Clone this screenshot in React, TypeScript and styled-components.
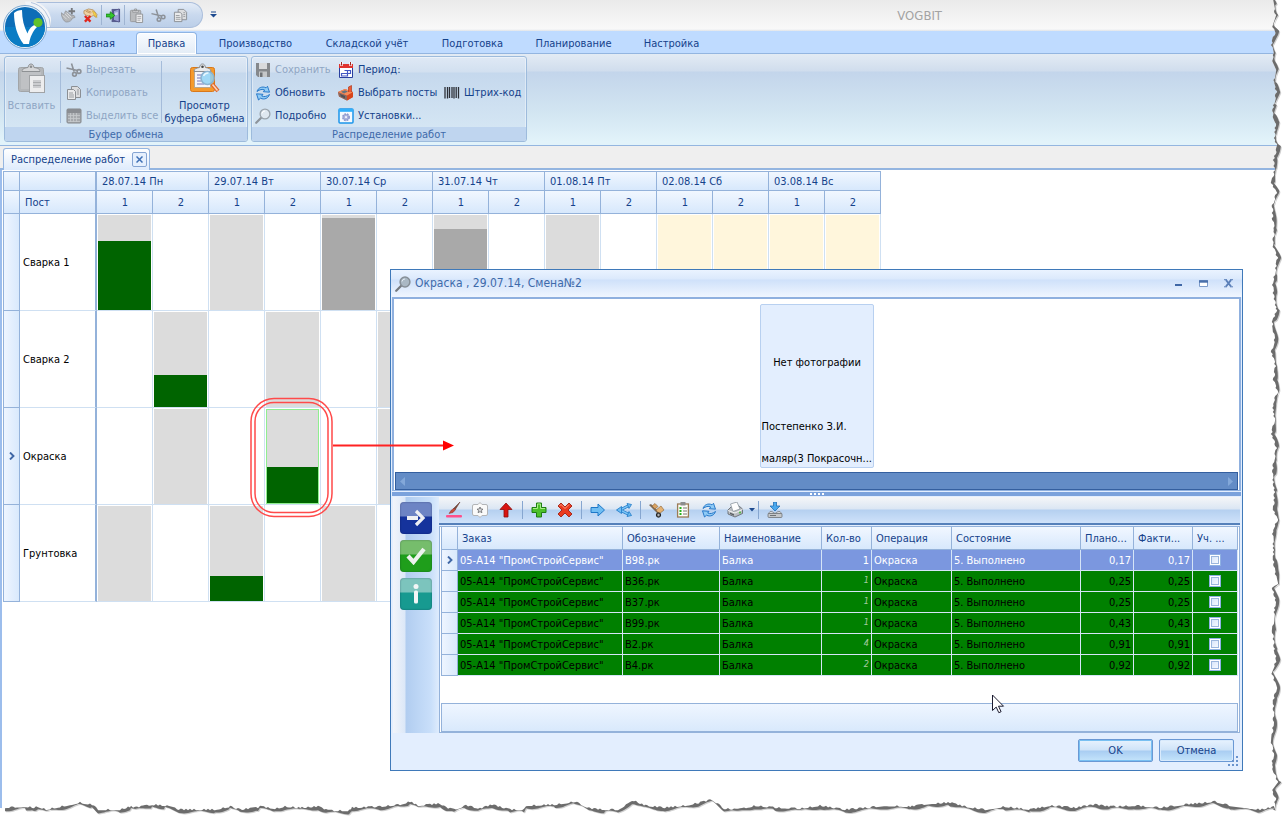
import React from "react";
import styled, { createGlobalStyle, css } from "styled-components";

const Global = createGlobalStyle`
  * { box-sizing: border-box; }
  html, body { margin: 0; padding: 0; background: #fff; }
  body, button, input, table {
    font-family: Tahoma, "DejaVu Sans Condensed", "DejaVu Sans", sans-serif;
    font-size: 11px;
    line-height: 13px;
  }
  button { padding: 0; margin: 0; border: 0; background: none; color: inherit; cursor: default; }
`;

/* ---------- icons ---------- */

const Svg = styled.svg<{ $s: number }>`
  display: block;
  flex: none;
  width: ${(p) => p.$s}px;
  height: ${(p) => p.$s}px;
`;

const art: Record<string, React.ReactNode> = {
  cut: (
    <g fill="none" stroke="#8d9299" strokeWidth="1.6">
      <path d="M5.500 1.500L8 9.500M.5 6l11 2.500" />
      <circle cx="13" cy="9.500" r="1.900" />
      <circle cx="8.500" cy="12.300" r="1.900" />
    </g>
  ),
  copy: (
    <g stroke="#8b8f94">
      <path d="M5.500 1.500h6l3 3v8h-9z" fill="#dcdddf" />
      <path d="M1.500 4.500h6l2 2v8h-8z" fill="#e9eaeb" />
      <path d="M3 8h4M3 10h5M3 12h5M11 5h2M11 7h2M11 9h2" stroke="#9a9da1" />
    </g>
  ),
  paste: (
    <g>
      <rect x="1.500" y="2.500" width="11" height="12" rx="1" fill="#b9bbbe" stroke="#97999c" />
      <path d="M4 2.500h6v2H4z M6 1h2v2H6z" fill="#dedfe0" stroke="#8b8d90" strokeWidth=".8" />
      <path d="M7.500 6.500h7v9h-7z" fill="#ececed" stroke="#919396" />
      <path d="M9 9h4M9 11h4M9 13h3" stroke="#a7a9ac" />
    </g>
  ),
  pasteBig: (
    <g>
      <rect x="2.500" y="5.500" width="25" height="24" rx="2" fill="#b4b7ba" stroke="#a2a5a8" />
      <rect x="5" y="8" width="20" height="19" fill="#bfc1c4" />
      <path d="M6 9.500c0-3 3-3.500 6-4 .5-2.500 1.500-3.500 3-3.500s2.500 1 3 3.500c3 .5 6 1 6 4z" fill="#d5d6d8" stroke="#8e9194" />
      <circle cx="15" cy="4.800" r="1.300" fill="#8b8e91" />
      <rect x="13.500" y="13.500" width="15" height="17" fill="#ededee" stroke="#a0a3a6" />
      <rect x="17" y="18" width="8" height="8" fill="#cccdd0" />
      <path d="M17 20.500h8M17 23.500h8" stroke="#a9abae" />
    </g>
  ),
  previewBig: (
    <g>
      <rect x="1.500" y="5.500" width="24" height="24" rx="2" fill="#f59a2c" stroke="#d9781a" />
      <rect x="5.500" y="9.500" width="16" height="16" fill="#f4f5fb" stroke="#b9a68d" />
      <path d="M5 9.500c0-3 3-3.500 5.500-4C11 3 12 2 13.500 2s2.500 1 3 3.500c2.500.5 5.500 1 5.500 4z" fill="#e9eaec" stroke="#8b8e92" />
      <circle cx="13.500" cy="4.800" r="1.300" fill="#444" />
      <path d="M8 13h6M8 16h4M8 19h4M8 22h7" stroke="#9ea0cf" strokeWidth="1.500" />
      <path d="M23 22l6 7" stroke="#e0662a" strokeWidth="4" />
      <path d="M23.500 22.500l5 6" stroke="#fbd5bd" strokeWidth="1.600" />
      <circle cx="18.500" cy="16" r="6.500" fill="#8fd2f5" fillOpacity=".85" stroke="#8bb4d2" strokeWidth="1.600" />
      <path d="M14.500 14a5 5 0 0 1 5-3" stroke="#e9f8ff" strokeWidth="1.500" fill="none" />
    </g>
  ),
  selectAll: (
    <g>
      <rect x="1" y="1" width="14" height="14" rx="1" fill="#a6a9ad" stroke="#85888c" />
      <rect x="1" y="1" width="14" height="4" fill="#8a8d92" />
      <path d="M2 7.500h12M2 10.500h12M2 13.500h12M4.500 5v9M7.500 5v9M10.500 5v9" stroke="#c7cacd" strokeWidth=".8" />
    </g>
  ),
  save: (
    <g>
      <path d="M1 1h14v14H3l-2-2z" fill="#85888c" />
      <rect x="4" y="1" width="8" height="6" fill="#d9dadc" />
      <rect x="4" y="9.500" width="8" height="5.500" fill="#c5c7c9" />
      <rect x="5" y="10.500" width="2.500" height="4.500" fill="#6f7276" />
    </g>
  ),
  refresh: (
    <g fill="#8fcbf6" stroke="#1b6fc4" strokeWidth=".9" strokeLinejoin="round">
      <path d="M2 6.500C3 3 7 .8 11 2.800L12.500 1.300 14.500 7.200 8.300 6.700 9.700 5C7.500 3.800 4.500 4.500 2 6.500z" />
      <path d="M14.500 9.500C13.500 13 9.500 15.200 5.500 13.200L3.500 15 1.500 8.800 8 9.300 6.700 11C9 12.200 12 11.500 14.500 9.500z" />
    </g>
  ),
  lens: (
    <g>
      <path d="M1.200 14.800l5-5" stroke="#8d949b" strokeWidth="2.200" strokeLinecap="round" />
      <circle cx="10" cy="6" r="4.900" fill="#dfe8f0" stroke="#9aa4ad" strokeWidth="1.300" />
      <path d="M7 5.500a3 3 0 0 1 3-2.500" stroke="#fff" fill="none" />
    </g>
  ),
  lensDark: (
    <g>
      <path d="M1.200 14.800l5-5" stroke="#74797f" strokeWidth="2.200" strokeLinecap="round" />
      <circle cx="10" cy="6" r="4.900" fill="#aab8c4" stroke="#868f97" strokeWidth="1.500" />
      <path d="M7 5.500a3 3 0 0 1 3-2.500" stroke="#e2ebf2" fill="none" />
    </g>
  ),
  calendar: (
    <g>
      <rect x="1.500" y="2.500" width="13" height="13" fill="#fff" stroke="#d8dbe6" />
      <rect x="1" y="2" width="14" height="4" fill="#e0342e" />
      <path d="M3.500 0v4M12.500 0v4" stroke="#fff" strokeWidth="2.400" />
      <path d="M3.500 0v3.500M12.500 0v3.500" stroke="#9c2822" />
      <path d="M1.500 6v9.500h13V6" fill="none" stroke="#2a3f9e" />
      <path d="M6.500 8.500h6v3h-9v2.500h6V8.500" fill="none" stroke="#4257c4" strokeWidth="1.200" />
    </g>
  ),
  posts: (
    <g>
      <path d="M0 7l7-3 8 3v5l-6 3.500-8-4z" fill="#d4512a" />
      <path d="M0 7l9 3.500v5l-8-4z" fill="#8a6a60" />
      <path d="M2 9l5 2v2.500l-4-2z" fill="#4f5157" />
      <path d="M9 10.500L15 7v5l-6 3.500z" fill="#d8461c" />
      <path d="M0 7l7-3 8 3-6 3.500z" fill="#f58a58" />
      <path d="M10.500 7V2l3-1.500V7" fill="#ec5a34" stroke="#b23a1c" strokeWidth=".7" />
      <path d="M3 6.800l4-1.600 3 1.300-4 2z" fill="#66727d" />
    </g>
  ),
  settings: (
    <g>
      <rect x="1" y="1" width="14" height="14" rx="1" fill="#f4faff" stroke="#1b95ea" strokeWidth="1.500" />
      <rect x="1" y="1" width="14" height="2.800" fill="#31b0fb" />
      <circle cx="8" cy="9.200" r="3.200" fill="#a8b2dd" stroke="#8d98cc" strokeWidth="1.600" strokeDasharray="1.700 .9" />
      <circle cx="8" cy="9.200" r="1.100" fill="#f1f3fb" />
    </g>
  ),
  barcode: (
    <path
      d="M1 2v12M3.500 2v12M5.500 2v11M8 2v11M10 2v12M12.200 2v11M14.500 2v12"
      stroke="#2c2f36"
      strokeWidth="1.300"
      strokeDasharray="11 .6"
    />
  ),
  handPlus: (
    <g>
      <path d="M0 5l3 2 2-4 4 3 2 2h3l1 2-3 1c0 2-3 4-6 4C4 15 1 12 0 5z" fill="#b4b6b9" stroke="#8b8e92" strokeWidth=".7" />
      <path d="M2 8l4 4M4 6l5 5M6 5l5 5" stroke="#dcdddf" />
      <path d="M11.500 0v7M8 3.500h7" stroke="#77797d" strokeWidth="2" />
    </g>
  ),
  handX: (
    <g>
      <path d="M1 3l5-2 5 1 4 5-1 3-3-2-2 1-5-1-3-2z" fill="#f0d2a4" stroke="#ab8047" strokeWidth=".7" />
      <path d="M10 3l3 2 2 5-3-2z" fill="#f8d54a" stroke="#c49a25" strokeWidth=".5" />
      <path d="M3 3.500l5 2M4 2.500l5 2" stroke="#b5874a" strokeWidth=".8" />
      <path d="M2 8.500l6 6M8 8.500l-6 6" stroke="#e0261d" strokeWidth="2.500" />
    </g>
  ),
  exit: (
    <g>
      <path d="M6 1h9v14H6z" fill="#595e8f" />
      <path d="M8 3l6-2v14l-6-2z" fill="#9a9fd4" stroke="#43477c" strokeWidth=".7" />
      <path d="M9.500 5l3-.8v3l-3 .5z" fill="#cfd3f2" />
      <path d="M0 6.500h4.500V4L9.500 8l-5 4V9.500H0z" fill="#35c62f" stroke="#178016" strokeWidth=".8" />
    </g>
  ),
  brush: (
    <g>
      <path d="M14 0L7.500 6.500 9 8z" fill="#7b4a3a" stroke="#5e3328" strokeWidth=".5" />
      <path d="M8 6.200l1.500 1.500L7 10.500 3 11.500 5 8.500z" fill="#c94b3c" stroke="#813127" strokeWidth=".5" />
      <rect x="0" y="13" width="16" height="2.600" rx="1" fill="#ff4f8b" />
    </g>
  ),
  star: (
    <g>
      <path d="M2 2.500h4l2-2 2 2h4a1.500 1.500 0 0 1 1.500 1.500v8a1.500 1.500 0 0 1-1.500 1.500h-4l-2 2-2-2H2A1.500 1.500 0 0 1 .5 12V4A1.500 1.500 0 0 1 2 2.500z" fill="#fafafa" stroke="#b2b4b7" />
      <path d="M8 5l.9 2 2.100.2-1.600 1.400.5 2.100L8 9.600l-1.900 1.100.5-2.100L5 7.200 7.100 7z" fill="#d5d6d8" stroke="#686a6d" strokeWidth=".8" />
    </g>
  ),
  up: <path d="M8 1l6 6.500h-4V15H6V7.500H2z" fill="#d81411" stroke="#8d0f0d" strokeWidth=".8" />,
  plus: (
    <g>
      <path d="M5.500 1h5v4.500H15v5h-4.500V15h-5v-4.500H1v-5h4.500z" fill="#4cc02a" stroke="#1f7d13" />
      <path d="M2 6.500h4.500V2h3v4.500H14" fill="none" stroke="#a7ee87" />
    </g>
  ),
  del: (
    <g>
      <path d="M1 4l3-3 4 4 4-4 3 3-4 4 4 4-3 3-4-4-4 4-3-3 4-4z" fill="#ea3a1f" stroke="#a31f10" strokeWidth=".9" />
      <path d="M2.500 4L4 2.500l4 4 4-4" fill="none" stroke="#ff9a80" />
    </g>
  ),
  right: <path d="M1 5.500h7V2l6.500 6L8 14v-3.500H1z" fill="#6fbdf2" stroke="#1d78c8" />,
  share: (
    <g>
      <path d="M13 3.500L4 8l9 4.500" fill="none" stroke="#1d78c8" strokeWidth="3" />
      <path d="M13 3.500L4 8l9 4.500" fill="none" stroke="#7cc5f5" strokeWidth="1.400" />
      <path d="M11 1.500l4.500 1-2.500 4zM11 14.500l4.500-1-2.500-4zM.5 8l5-3.500v7z" fill="#6fbdf2" stroke="#1d78c8" strokeWidth=".8" />
    </g>
  ),
  barrow: (
    <g>
      <path d="M0 3l2-1 9 9-2 1z" fill="#7b6a58" />
      <path d="M3 4l3-2.500 3 3L6 7z" fill="#d9a262" stroke="#8c6231" strokeWidth=".6" />
      <path d="M7 8l5-4 3 4-5 4z" fill="#e3b274" stroke="#8c6231" strokeWidth=".6" />
      <circle cx="9.500" cy="13" r="2.200" fill="#666" stroke="#222" />
      <circle cx="9.500" cy="13" r=".8" fill="#ddd" />
    </g>
  ),
  checklist: (
    <g>
      <rect x="2.600" y="2" width="10.800" height="13" fill="#fdfdf8" stroke="#9a7b56" strokeWidth="1.300" />
      <rect x="5.500" y="0" width="5" height="3.500" fill="#8b8d8f" />
      <path d="M4.500 6h2M4.500 9h2M4.500 12h2" stroke="#27b321" strokeWidth="1.800" />
      <path d="M8 6h4M8 9h4M8 12h4" stroke="#777" />
    </g>
  ),
  printer: (
    <g>
      <path d="M1 8l3-3 8-1 3.500 3v4.500L8 15l-7-3z" fill="#b9bdc1" stroke="#5d6166" strokeWidth=".8" />
      <path d="M3.500 2L10 0l3 7-7 2.500z" fill="#fdfdfd" stroke="#8c959e" strokeWidth=".8" />
      <path d="M1 8.500l7 2.500 7.500-3.500" fill="none" stroke="#f3f4f5" />
      <path d="M3 10.500l4 1.800v1.400l-4-1.700z" fill="#5b5f64" />
      <circle cx="13" cy="10.500" r=".9" fill="#3fbf2e" />
    </g>
  ),
  download: (
    <g>
      <path d="M6.500 0h3v4H13L8 9 3 4h3.500z" fill="#4ba9ee" stroke="#2370b5" strokeWidth=".8" />
      <path d="M1 12l2-2.500h2l3 2 3-2h2l2 2.500z" fill="#d6d8da" stroke="#777a7e" strokeWidth=".7" />
      <rect x="1" y="11.500" width="14" height="4" rx="1" fill="#c4c7ca" stroke="#6f7377" strokeWidth=".8" />
      <path d="M3 13.500h6" stroke="#6f7377" />
    </g>
  ),
};

const Icon = ({ name, size = 16, box = 16 }: { name: string; size?: number; box?: number }) => (
  <Svg $s={size} viewBox={`0 0 ${box} ${box}`} aria-hidden="true">
    {art[name]}
  </Svg>
);

/* ---------- shell ---------- */

const Page = styled.div`
  position: relative;
  min-height: 100vh;
  display: flex;
  flex-direction: column;
  background: #fff;
  overflow: hidden;
`;

const TitleBar = styled.header`
  height: 31px;
  display: flex;
  align-items: flex-start;
  padding-left: 32px;
  background: linear-gradient(#eaeaea, #f9f9f9 29px, #dfe3e8);
`;

const Orb = styled.button`
  position: absolute;
  left: 3px;
  top: 5px;
  width: 44px;
  height: 44px;
  border-radius: 50%;
  z-index: 2;
`;

const OrbArt = styled.svg`
  display: block;
  width: 52px;
  height: 52px;
  margin: -4px;
`;

const QuickBar = styled.div`
  height: 26px;
  margin-top: 2px;
  padding: 0 11px 0 25px;
  display: flex;
  align-items: center;
  border: 1px solid #a9bddb;
  border-left: 0;
  border-radius: 0 14px 14px 0;
  background: linear-gradient(#e4ecf7, #c9d9ee 50%, #bccfe8);
`;

const QuickButton = styled.button`
  width: 22px;
  height: 22px;
  display: grid;
  place-items: center;
`;

const QuickRule = styled.i`
  width: 1px;
  height: 20px;
  background: #9fb4d2;
`;

const QuickMore = styled.button`
  width: 20px;
  height: 28px;
  display: grid;
  place-items: center;
`;

const AppTitle = styled.h1`
  margin: 8px 344px 0 auto;
  font-size: 13px;
  line-height: 16px;
  font-weight: 400;
  color: #a3a3a3;
`;

const Tabs = styled.nav`
  height: 23px;
  display: flex;
  gap: 10px;
  padding: 1px 0 0 61px;
  background: #bfdbff;
  border-bottom: 1px solid #93b5e0;
`;

const RibbonTab = styled.button<{ $w: number; $on?: boolean }>`
  min-width: ${(p) => p.$w}px;
  height: 22px;
  white-space: nowrap;
  color: #15428b;
  ${(p) =>
    p.$on &&
    css`
      background: linear-gradient(#f8fbff, #e3ecf6);
      border: 1px solid #8fb4e3;
      border-bottom: 0;
      border-radius: 4px 4px 0 0;
      box-shadow: inset 0 0 0 1px #fff;
    `}
`;

const Ribbon = styled.div`
  height: 92px;
  display: flex;
  gap: 3px;
  padding: 2px 4px;
  background: linear-gradient(#e3ebf4, #d0dded 17px, #c3d5eb 18px, #d3e6f2 60px, #e2f3fa 88px);
  border-bottom: 1px solid #94b6e0;
  box-shadow: 0 1px 0 #c3d7f2;
`;

const Group = styled.section`
  height: 86px;
  display: flex;
  flex-direction: column;
  border: 1px solid #9dbbdc;
  border-radius: 3px;
  overflow: hidden;
  background: linear-gradient(#dfe9f5, #d2e0f0 15px, #c5d8ed 16px, #d8e9f5);
  box-shadow: inset 0 0 0 1px rgba(255, 255, 255, 0.4);
`;

const GroupBody = styled.div`
  flex: 1;
  display: flex;
  padding: 1px 3px 0 1px;
`;

const GroupCaption = styled.h2`
  margin: 0;
  height: 15px;
  font-size: 11px;
  line-height: 15px;
  font-weight: 400;
  text-align: center;
  color: #3e6aaa;
  background: #bfd5ef;
`;

const BigButton = styled.button<{ $w: number }>`
  width: ${(p) => p.$w}px;
  height: 69px;
  display: flex;
  flex-direction: column;
  align-items: center;
  gap: 5px;
  padding-top: 4px;
  color: #15428b;
  white-space: nowrap;
  &:disabled { color: #8fa6c4; }
`;

const Rule = styled.i`
  width: 1px;
  height: 62px;
  margin: 3px 3px 0;
  background: #a5bcda;
`;

const Stack = styled.div<{ $w: number }>`
  width: ${(p) => p.$w}px;
  display: grid;
  grid-template-rows: repeat(3, 23px);
`;

const SmallButton = styled.button<{ $row?: number }>`
  grid-row: ${(p) => p.$row ?? "auto"};
  display: flex;
  align-items: center;
  gap: 4px;
  padding-left: 2px;
  color: #15428b;
  white-space: nowrap;
  &:disabled { color: #8fa6c4; }
`;

const DocTabs = styled.div`
  height: 24px;
  padding: 2px 0 0 3px;
  background: #efefef;
  border-bottom: 2px solid #94b5e0;
`;

const DocTab = styled.div`
  width: 147px;
  height: 22px;
  position: relative;
  display: flex;
  align-items: center;
  justify-content: space-between;
  padding: 0 2px 0 7px;
  color: #15428b;
  white-space: nowrap;
  border: 1px solid #94b5e0;
  border-bottom: 0;
  border-radius: 3px 3px 0 0;
  background: linear-gradient(#fff, #deebfc);
`;

const DocClose = styled.button`
  width: 15px;
  height: 15px;
  display: grid;
  place-items: center;
  border: 1px solid #86a5d2;
  border-radius: 2px;
  background: #e6f0fd;
`;

/* ---------- schedule ---------- */

const Workspace = styled.main`
  flex: 1;
  padding: 1px 0 0 1px;
  border-left: 2px solid #9cbdec;
`;

const Plan = styled.table`
  width: 878px;
  table-layout: fixed;
  border-collapse: separate;
  border-spacing: 0;
  border-left: 1px solid #94b2da;
  border-top: 1px solid #94b2da;
`;

const HeadCell = styled.th<{ $h: number; $left?: boolean; $freeze?: boolean }>`
  height: ${(p) => p.$h}px;
  padding: 0 4px 0 5px;
  font-weight: 400;
  text-align: ${(p) => (p.$left ? "left" : "center")};
  color: #15428b;
  white-space: nowrap;
  background: linear-gradient(#f1f7ff, #d7e8fc);
  border-right: ${(p) => (p.$freeze ? 2 : 1)}px solid #94b2da;
  border-bottom: 1px solid #94b2da;
`;

const Marker = styled.td`
  padding: 0;
  text-align: center;
  background: linear-gradient(90deg, #eef5ff, #d9e9fc);
  border-right: 1px solid #94b2da;
  border-bottom: 1px solid #94b2da;
`;

const Arrow = styled.svg`
  display: block;
  width: 6px;
  height: 8px;
  margin: 0 auto;
`;

const PostName = styled.th`
  height: 97px;
  padding: 0 3px;
  font-weight: 400;
  text-align: left;
  color: #000;
  border-right: 2px solid #94b2da;
  border-bottom: 1px solid #cfe0f2;
`;

const Shift = styled.td`
  height: 97px;
  padding: 1px 1px 0;
  border-right: 1px solid #cfe0f2;
  border-bottom: 1px solid #cfe0f2;
`;

const Bar = styled.div<{ $tone: string; $focus?: boolean }>`
  height: 95px;
  display: flex;
  align-items: flex-end;
  background: ${(p) => p.$tone};
  outline: ${(p) => (p.$focus ? "1px solid #90ee90" : "none")};
  outline-offset: -1px;
`;

const Load = styled.div<{ $h: number; $tone: string }>`
  width: 100%;
  height: ${(p) => p.$h}px;
  background: ${(p) => p.$tone};
`;

const Chevron = () => (
  <Arrow viewBox="0 0 6 8" aria-hidden="true">
    <path d="M1 .5L4.500 4 1 7.500" fill="none" stroke="#3f67a6" strokeWidth="1.900" />
  </Arrow>
);

type Slot = null | { base: string; load?: number; tone?: string; focus?: boolean };
const G: Slot = { base: "#dcdcdc" };
const C: Slot = { base: "#fff6dc" };
const green = (load: number, focus = false): Slot => ({ base: "#dcdcdc", load, tone: "#006400", focus });
const dark = (load: number): Slot => ({ base: "#dcdcdc", load, tone: "#a9a9a9" });

const days = ["28.07.14 Пн", "29.07.14 Вт", "30.07.14 Ср", "31.07.14 Чт", "01.08.14 Пт", "02.08.14 Сб", "03.08.14 Вс"];
const posts: { name: string; current?: boolean; slots: Slot[] }[] = [
  { name: "Сварка 1", slots: [green(69), null, G, null, dark(92), null, dark(81), null, G, null, C, C, C, C] },
  { name: "Сварка 2", slots: [null, green(32), null, G, null, G, null, G, null, null, C, C, C, C] },
  { name: "Окраска", current: true, slots: [null, G, null, green(37, true), null, G, null, G, null, null, C, C, C, C] },
  { name: "Грунтовка", slots: [G, null, green(25), null, G, null, G, null, G, null, C, C, C, C] },
];

const Schedule = () => (
  <Plan>
    <colgroup>
      <col style={{ width: 16 }} />
      <col style={{ width: 77 }} />
      {days.flatMap((d) => [<col key={d + 1} style={{ width: 56 }} />, <col key={d + 2} style={{ width: 56 }} />])}
    </colgroup>
    <thead>
      <tr>
        <HeadCell $h={19} />
        <HeadCell $h={19} $freeze />
        {days.map((d) => (
          <HeadCell key={d} $h={19} $left colSpan={2}>
            {d}
          </HeadCell>
        ))}
      </tr>
      <tr>
        <HeadCell $h={23} />
        <HeadCell $h={23} $left $freeze>
          Пост
        </HeadCell>
        {days.flatMap((d) =>
          [1, 2].map((n) => (
            <HeadCell key={d + n} $h={23}>
              {n}
            </HeadCell>
          ))
        )}
      </tr>
    </thead>
    <tbody>
      {posts.map((p) => (
        <tr key={p.name}>
          <Marker>{p.current && <Chevron />}</Marker>
          <PostName scope="row">{p.name}</PostName>
          {p.slots.map((s, i) => (
            <Shift key={i}>
              {s && (
                <Bar $tone={s.base} $focus={s.focus}>
                  {s.load && <Load $h={s.load} $tone={s.tone!} />}
                </Bar>
              )}
            </Shift>
          ))}
        </tr>
      ))}
    </tbody>
  </Plan>
);

/* ---------- dialog ---------- */

const Dialog = styled.section`
  position: absolute;
  left: 390px;
  top: 269px;
  width: 853px;
  display: flex;
  flex-direction: column;
  border: 1px solid #3f79b9;
  background: #e3eefe;
`;

const DialogTitle = styled.div`
  height: 27px;
  display: flex;
  align-items: center;
  gap: 4px;
  padding: 0 3px 0 4px;
  background: linear-gradient(#eaf3ff, #dbe9fc 9px, #cfe1fa 10px, #f0f6ff);
  h2 {
    flex: 1;
    margin: 0;
    font-size: 12px;
    line-height: 15px;
    font-weight: 400;
    color: #3e6aaa;
  }
`;

const WindowButtons = styled.div`
  display: flex;
  gap: 4px;
`;

const WindowButton = styled.button`
  width: 21px;
  height: 20px;
  display: grid;
  place-items: center;
`;

const Photos = styled.div`
  height: 194px;
  margin: 0 1px;
  display: flex;
  flex-direction: column;
  align-items: center;
  padding: 5px 1px 0;
  background: #fff;
  border: solid #8fb0df;
  border-width: 2px 2px 1px;
`;

const Person = styled.article`
  width: 114px;
  height: 164px;
  margin-bottom: auto;
  padding: 1px 0 2px 1px;
  display: flex;
  flex-direction: column;
  color: #000;
  background: #e3eefe;
  border: 1px solid #b8d0f0;
  border-radius: 2px;
  p { margin: 0; white-space: nowrap; }
  p:first-child { height: 114px; line-height: 114px; text-align: center; }
  p + p { height: 13px; }
  p:last-child { margin-top: auto; }
`;

const ScrollTrack = styled.div`
  align-self: stretch;
  height: 18px;
  display: flex;
  align-items: center;
  justify-content: space-between;
  padding: 0 4px;
  background: #638cc6;
  border: 1px solid #345f9f;
`;

const Splitter = styled.div`
  height: 6px;
  margin: 0 1px;
  display: flex;
  justify-content: center;
  align-items: center;
  gap: 2px;
  background: #7ba2dc;
  border: 1px solid #e3eefe;
  border-width: 1px 0;
  i { width: 2px; height: 2px; background: #fff; }
`;

const Work = styled.div`
  height: 236px;
  display: flex;
  margin: 0 2px;
`;

const Side = styled.div`
  width: 46px;
  display: flex;
  flex-direction: column;
  gap: 6px;
  padding: 5px 0 0 7px;
  background: linear-gradient(90deg, #f1f4fa, #dce8f8 12px, #b1cdf0 13px, #c9dffa 38px, #dfecfd);
`;

const SideButton = styled.button<{ $from: string; $to: string }>`
  width: 32px;
  height: 32px;
  display: grid;
  place-items: center;
  border-radius: 4px;
  background: ${(p) => `linear-gradient(${p.$from} 0 4px, ${p.$from} 14px, ${p.$to} 15px, ${p.$to})`};
  box-shadow: inset 0 0 2px rgba(0, 0, 40, 0.4);
`;

const Right = styled.div`
  flex: 1;
  min-width: 0;
  display: flex;
  flex-direction: column;
`;

const Tools = styled.div`
  height: 28px;
  display: flex;
  align-items: center;
  padding-left: 2px;
  background: linear-gradient(#f5f6f8, #dbe6f3 12px, #b5d0f0 13px, #cfe2fa);
  border-bottom: 2px solid #5580ba;
`;

const Tool = styled.button`
  width: 26px;
  height: 24px;
  display: grid;
  place-items: center;
`;

const ToolRule = styled.i`
  width: 7px;
  height: 18px;
  background: linear-gradient(90deg, transparent 3px, #86a6d0 3px 4px, transparent 4px);
`;

const Caret = styled.button`
  width: 7px;
  height: 24px;
  display: grid;
  place-items: center;
`;

const GridBox = styled.div`
  flex: 1;
  margin-top: 1px;
  padding: 0 1px;
  display: flex;
  flex-direction: column;
  background: #fff;
  border: 1px solid #94b2da;
`;

const Orders = styled.table`
  width: 100%;
  table-layout: fixed;
  border-collapse: separate;
  border-spacing: 0;
  border-left: 1px solid #94b2da;
`;

const OrderHead = styled.th`
  height: 23px;
  padding: 0 4px;
  font-weight: 400;
  text-align: left;
  white-space: nowrap;
  overflow: hidden;
  color: #15428b;
  background: linear-gradient(#f1f7ff, #d7e8fc);
  border-right: 1px solid #94b2da;
  border-bottom: 1px solid #94b2da;
`;

const OrderRow = styled.tr<{ $on?: boolean }>`
  color: ${(p) => (p.$on ? "#fff" : "#000")};
  background: ${(p) => (p.$on ? "#7b97df" : "#008000")};
`;

const OrderCell = styled.td<{ $num?: boolean; $faint?: boolean }>`
  height: 21px;
  padding: 0 2px;
  white-space: nowrap;
  overflow: hidden;
  text-align: ${(p) => (p.$num ? "right" : "left")};
  border-right: 1px solid #d5e5f7;
  border-bottom: 1px solid #d5e5f7;
  ${(p) =>
    p.$faint &&
    css`
      padding-top: 3px;
      font-size: 9px;
      font-style: italic;
      vertical-align: top;
      color: #a5cba0;
    `}
`;

const Tick = styled.input`
  appearance: none;
  display: block;
  width: 12px;
  height: 12px;
  margin: 0 auto;
  border: 1px solid #8fb1e3;
  background: linear-gradient(135deg, #cfe0fa, #fff);
  box-shadow: inset 0 0 0 1px #fff, inset 0 0 0 2px #9bb6dd;
`;

const Summary = styled.div`
  height: 29px;
  margin-top: auto;
  border: 1px solid #94b2da;
  background: linear-gradient(#eff6ff, #d9e9fc);
`;

const Footer = styled.footer`
  position: relative;
  height: 37px;
  display: flex;
  justify-content: flex-end;
  gap: 6px;
  padding: 6px 8px 0 0;
`;

const PushButton = styled.button<{ $primary?: boolean }>`
  width: 75px;
  height: 23px;
  color: #15428b;
  border: 1px solid #6a98d4;
  border-radius: 2px;
  background: linear-gradient(#e7f2fe, #cfe3f8 10px, #a9cdf2 11px, #c4e4fb);
  box-shadow: inset 0 0 0 1px ${(p) => (p.$primary ? "#78c0f2" : "#d9eafc")};
`;

const Grip = styled.svg`
  position: absolute;
  right: 4px;
  bottom: 4px;
  width: 10px;
  height: 10px;
`;

const columns: { t: string; w?: number }[] = [
  { t: "Заказ", w: 165 },
  { t: "Обозначение", w: 97 },
  { t: "Наименование", w: 102 },
  { t: "Кол-во", w: 50 },
  { t: "Операция", w: 80 },
  { t: "Состояние", w: 129 },
  { t: "Плано...", w: 53 },
  { t: "Факти...", w: 59 },
  { t: "Уч. ..." },
];
const orders: [string, number, string][] = [
  ["В98.рк", 1, "0,17"],
  ["В36.рк", 1, "0,25"],
  ["В37.рк", 1, "0,25"],
  ["В99.рк", 1, "0,43"],
  ["В2.рк", 4, "0,91"],
  ["В4.рк", 2, "0,92"],
];

const tools = ["brush", "star", "up", "|", "plus", "del", "|", "right", "share", "|", "barrow", "checklist", "refresh", "printer", "v", "|", "download"];

const ShiftDialog = () => (
  <Dialog role="dialog" aria-labelledby="shift-title">
    <DialogTitle>
      <Icon name="lensDark" />
      <h2 id="shift-title">Окраска , 29.07.14, Смена№2</h2>
      <WindowButtons>
        <WindowButton aria-label="Свернуть">
          <svg width="9" height="9" aria-hidden="true"><path d="M1 6h7" stroke="#3f67a6" strokeWidth="2" /></svg>
        </WindowButton>
        <WindowButton aria-label="Развернуть">
          <svg width="10" height="8" aria-hidden="true">
            <path d="M.5 .5h8v6h-8z" fill="#fff" stroke="#7d9ccb" />
            <path d="M0 1.500h9" stroke="#4a70ab" strokeWidth="2.400" />
          </svg>
        </WindowButton>
        <WindowButton aria-label="Закрыть">
          <svg width="10" height="9" aria-hidden="true">
            <path d="M2 1l5 6.500M7 1L2 7.500" stroke="#5b7fb8" strokeWidth="2" />
            <path d="M0 .7h3M6 .7h3M0 7.800h3M6 7.800h3" stroke="#5b7fb8" />
          </svg>
        </WindowButton>
      </WindowButtons>
    </DialogTitle>
    <Photos>
      <Person>
        <p>Нет фотографии</p>
        <p>Постепенко З.И.</p>
        <p>маляр(3 Покрасочн...</p>
      </Person>
      <ScrollTrack>
        <svg width="5" height="9" aria-hidden="true"><path d="M5 0v9L0 4.500z" fill="#83a8d9" /></svg>
        <svg width="5" height="9" aria-hidden="true"><path d="M0 0v9l5-4.500z" fill="#83a8d9" /></svg>
      </ScrollTrack>
    </Photos>
    <Splitter><i /><i /><i /><i /></Splitter>
    <Work>
      <Side>
        <SideButton $from="#6d84c4" $to="#15339c" aria-label="Начать">
          <svg width="20" height="18" aria-hidden="true"><path d="M1 9h11" stroke="#eef0f4" strokeWidth="4" /><path d="M10 2l7 7-7 7" fill="none" stroke="#eef0f4" strokeWidth="3.200" /></svg>
        </SideButton>
        <SideButton $from="#76bd6c" $to="#1f9e1b" aria-label="Выполнить">
          <svg width="20" height="18" aria-hidden="true"><path d="M2 9l5.500 6L18 2" fill="none" stroke="#eef3ee" strokeWidth="4.200" /></svg>
        </SideButton>
        <SideButton $from="#7cc4bd" $to="#179a90" aria-label="Сведения">
          <svg width="8" height="20" aria-hidden="true"><circle cx="4" cy="2.600" r="2.500" fill="#f2f6f6" /><rect x="2" y="6.500" width="4" height="13" rx="1.500" fill="#f2f6f6" /></svg>
        </SideButton>
      </Side>
      <Right>
        <Tools>
          {tools.map((t, i) =>
            t === "|" ? (
              <ToolRule key={i} />
            ) : t === "v" ? (
              <Caret key={i} aria-label="Варианты печати">
                <svg width="6" height="4" aria-hidden="true"><path d="M0 0h6L3 3.500z" fill="#1d4a8f" /></svg>
              </Caret>
            ) : (
              <Tool key={i} aria-label={t}>
                <Icon name={t} />
              </Tool>
            )
          )}
        </Tools>
        <GridBox>
          <Orders>
            <colgroup>
              <col style={{ width: 16 }} />
              {columns.map((c) => (
                <col key={c.t} style={{ width: c.w }} />
              ))}
            </colgroup>
            <thead>
              <tr>
                <OrderHead />
                {columns.map((c) => (
                  <OrderHead key={c.t}>{c.t}</OrderHead>
                ))}
              </tr>
            </thead>
            <tbody>
              {orders.map(([code, qty, hours], i) => (
                <OrderRow key={code} $on={i === 0}>
                  <Marker>{i === 0 && <Chevron />}</Marker>
                  <OrderCell>05-А14 "ПромСтройСервис"</OrderCell>
                  <OrderCell>{code}</OrderCell>
                  <OrderCell>Балка</OrderCell>
                  <OrderCell $num $faint={i > 0}>{qty}</OrderCell>
                  <OrderCell>Окраска</OrderCell>
                  <OrderCell>5. Выполнено</OrderCell>
                  <OrderCell $num>{hours}</OrderCell>
                  <OrderCell $num>{hours}</OrderCell>
                  <OrderCell>
                    <Tick type="checkbox" aria-label={`Учтено ${code}`} />
                  </OrderCell>
                </OrderRow>
              ))}
            </tbody>
          </Orders>
          <Summary />
        </GridBox>
      </Right>
    </Work>
    <Footer>
      <PushButton $primary>OK</PushButton>
      <PushButton>Отмена</PushButton>
      <Grip aria-hidden="true">
        <path d="M8 0h2v2H8zM4 4h2v2H4zM8 4h2v2H8zM0 8h2v2H0zM4 8h2v2H4zM8 8h2v2H8z" fill="#6a93cd" />
      </Grip>
    </Footer>
  </Dialog>
);

/* ---------- callout, pointer and torn paper edge ---------- */

const Callout = styled.svg`
  position: absolute;
  left: 248px;
  top: 394px;
  width: 208px;
  height: 126px;
  pointer-events: none;
`;

const Pointer = styled.svg`
  position: absolute;
  left: 992px;
  top: 694px;
  width: 13px;
  height: 20px;
`;

const TearRight = styled.svg`
  position: absolute;
  right: 0;
  top: 0;
  width: 20px;
  height: 818px;
  z-index: 3;
  pointer-events: none;
`;

const TearBottom = styled.svg`
  position: absolute;
  right: 0;
  bottom: 0;
  width: 1286px;
  height: 24px;
  z-index: 3;
  pointer-events: none;
`;

const sideKnots = [
  [0, 8], [5, 9], [15, 11], [27, 7], [31, 11], [37, 9], [45, 7], [55, 9], [61, 7], [70, 11], [83, 9], [92, 12], [105, 9],
  [115, 8], [122, 11], [140, 10], [146, 13], [160, 9], [170, 10], [183, 7], [193, 12], [205, 8], [218, 8], [230, 10],
  [245, 8], [258, 13], [275, 10], [283, 8], [295, 9], [310, 12], [322, 8], [340, 10], [352, 7], [366, 11], [380, 9],
  [392, 13], [404, 8], [420, 10], [434, 7], [448, 12], [462, 9], [476, 8], [492, 10], [510, 9], [520, 13], [530, 8],
  [550, 9], [560, 9], [570, 10], [584, 13], [588, 8], [600, 11], [631, 8], [650, 10], [660, 12], [672, 7], [688, 12],
  [700, 9], [720, 9], [743, 7], [755, 9], [765, 7], [782, 13], [790, 7], [798, 11], [811, 9],
];
const footKnots = [
  [5, 15], [26, 14], [34, 15], [38, 14], [46, 17], [66, 13], [80, 10], [92, 12], [98, 17], [120, 17], [131, 14], [135, 15],
  [152, 12], [165, 13], [180, 17], [215, 17], [230, 14], [234, 15], [240, 17], [258, 15], [260, 14], [275, 16], [285, 14],
  [300, 15], [318, 14], [328, 18], [349, 18], [352, 15], [380, 14], [400, 12], [410, 9], [418, 13], [440, 11], [446, 15],
  [454, 17], [466, 13], [480, 16], [492, 12], [510, 17], [524, 17], [526, 13], [555, 12], [575, 9], [590, 16], [605, 17],
  [618, 17], [634, 8], [645, 13], [665, 15], [685, 13], [700, 10], [712, 7], [724, 16], [738, 17], [755, 13], [775, 15],
  [800, 16], [820, 13], [845, 17], [868, 15], [885, 13], [910, 14], [930, 11], [950, 10], [965, 14], [985, 17], [1005, 14],
  [1030, 17], [1050, 13], [1075, 15], [1095, 12], [1110, 14], [1135, 13], [1160, 15], [1185, 12], [1215, 9], [1230, 13],
  [1260, 17], [1275, 14],
];
const noise = (n: number) => {
  const v = Math.sin(n * 12.9898) * 43758.5453;
  return v - Math.floor(v);
};

/* Ragged outline whose dark rim swells and thins along its length. */
function tear(knots: number[][], flip: boolean) {
  const near: string[] = [];
  const far: string[] = [];
  const at = (along: number, across: number) => (flip ? `${across.toFixed(1)} ${along}` : `${along} ${across.toFixed(1)}`);
  for (let k = 0; k < knots.length - 1; k++) {
    const [a, u] = knots[k];
    const [b, v] = knots[k + 1];
    for (let s = a; s < b; s += 2) {
      const mid = u + ((v - u) * (s - a)) / (b - a);
      const swell = 0.5 + 0.5 * Math.sin(s / 5 + 3 * noise(k));
      near.push(at(s, mid - 0.6 - (noise(s) > 0.6 ? 1.6 : 0.2)));
      far.push(at(s, mid - 0.2 + swell * 2.6));
    }
  }
  return { near, far };
}

const side = tear(sideKnots, true);
const foot = tear(footKnots, false);
const band = (t: { near: string[]; far: string[] }) => `M${t.near.join("L")}L${[...t.far].reverse().join("L")}Z`;

const Tear = () => (
  <>
    <TearBottom viewBox="0 0 1286 24" aria-hidden="true">
      <path d={`M0 14L${foot.near.join("L")}L1286 24L0 24Z`} fill="#fff" />
      <path d={band(foot)} fill="#cfcfcf" transform="translate(1 1)" />
      <path d={band(foot)} fill="#6c6c6c" />
    </TearBottom>
    <TearRight viewBox="0 0 20 818" aria-hidden="true">
      <path d={`M${side.near.join("L")}L12 818L20 818L20 0Z`} fill="#fff" />
      <path d={band(side)} fill="#cfcfcf" transform="translate(1 1)" />
      <path d={band(side)} fill="#6c6c6c" />
    </TearRight>
  </>
);

const quick = ["handPlus", "handX", "|", "exit", "|", "paste", "cut", "copy"];
const ribbonTabs: [string, number][] = [
  ["Главная", 65], ["Правка", 61], ["Производство", 97], ["Складской учёт", 106],
  ["Подготовка", 85], ["Планирование", 97], ["Настройка", 79],
];

export default function App() {
  return (
    <>
      <Global />
      <Page>
        <TitleBar>
          <QuickBar>
            {quick.map((q, i) =>
              q === "|" ? (
                <QuickRule key={i} />
              ) : (
                <QuickButton key={i} aria-label={q}>
                  <Icon name={q} size={15} />
                </QuickButton>
              )
            )}
          </QuickBar>
          <QuickMore aria-label="Настроить панель">
            <svg width="7" height="7" aria-hidden="true"><path d="M1 1h5" stroke="#1d4a8f" /><path d="M0 3h7L3.500 6.500z" fill="#1d4a8f" /></svg>
          </QuickMore>
          <AppTitle>VOGBIT</AppTitle>
        </TitleBar>
        <Orb aria-label="Меню VOGBIT">
          <OrbArt viewBox="-4 -4 52 52" aria-hidden="true">
            <path d="M22 -3.500h6a21 21 0 0 1 20 25.500h-20z" fill="#f2f4f7" />
            <path d="M28 -2.500a25 25 0 0 1 19.500 24.500" fill="none" stroke="#b5c6df" />
            <circle cx="22" cy="22" r="21.500" fill="#e9f3fb" stroke="#7da7cf" />
            <circle cx="22" cy="22" r="20" fill="#0d6db7" />
            <path d="M2 22a20 20 0 0 0 40 0z" fill="#0a7cc4" />
            <path d="M11 8c2-2 5-3 8-3 0 9 2 17 5.500 23.500C26 24 29 20.500 32 20l2 2c-4 4-7 10-8 17h-5.500C14 31 11 19 11 8z" fill="#fff" />
            <circle cx="35" cy="17.500" r="4.600" fill="#5fc22c" />
          </OrbArt>
        </Orb>
        <Tabs>
          {ribbonTabs.map(([t, w]) => (
            <RibbonTab key={t} $w={w} $on={t === "Правка"}>
              {t}
            </RibbonTab>
          ))}
        </Tabs>
        <Ribbon>
          <Group>
            <GroupBody>
              <BigButton $w={51} disabled>
                <Icon name="pasteBig" size={32} box={32} />
                Вставить
              </BigButton>
              <Rule />
              <Stack $w={94}>
                <SmallButton disabled><Icon name="cut" />Вырезать</SmallButton>
                <SmallButton disabled><Icon name="copy" />Копировать</SmallButton>
                <SmallButton disabled><Icon name="selectAll" />Выделить все</SmallButton>
              </Stack>
              <Rule />
              <BigButton $w={79}>
                <Icon name="previewBig" size={32} box={32} />
                <span>Просмотр<br />буфера обмена</span>
              </BigButton>
            </GroupBody>
            <GroupCaption>Буфер обмена</GroupCaption>
          </Group>
          <Group>
            <GroupBody>
              <Stack $w={83}>
                <SmallButton disabled><Icon name="save" />Сохранить</SmallButton>
                <SmallButton><Icon name="refresh" />Обновить</SmallButton>
                <SmallButton><Icon name="lens" />Подробно</SmallButton>
              </Stack>
              <Stack $w={106}>
                <SmallButton><Icon name="calendar" />Период:</SmallButton>
                <SmallButton><Icon name="posts" />Выбрать посты</SmallButton>
                <SmallButton><Icon name="settings" />Установки...</SmallButton>
              </Stack>
              <Stack $w={81}>
                <SmallButton $row={2}><Icon name="barcode" />Штрих-код</SmallButton>
              </Stack>
            </GroupBody>
            <GroupCaption>Распределение работ</GroupCaption>
          </Group>
        </Ribbon>
        <DocTabs>
          <DocTab>
            Распределение работ
            <DocClose aria-label="Закрыть вкладку">
              <svg width="7" height="7" aria-hidden="true"><path d="M.5 .5l6 6M6.500 .5l-6 6" stroke="#3f70b5" strokeWidth="1.500" /></svg>
            </DocClose>
          </DocTab>
        </DocTabs>
        <Workspace>
          <Schedule />
        </Workspace>
        <ShiftDialog />
        <Callout viewBox="0 0 208 126" aria-hidden="true">
          <g fill="none" stroke="#ff4a4a" strokeWidth="1.500">
            <rect x="3" y="4.500" width="81" height="118" rx="23" />
            <rect x="7" y="8.500" width="73" height="110" rx="19" />
          </g>
          <path d="M85 51.500h112" stroke="#f22" strokeWidth="2" />
          <path d="M195 46.500v10l11-5z" fill="#f00" />
        </Callout>
        <Pointer viewBox="0 0 13 20" aria-hidden="true">
          <path d="M.5 1v15.500l3.700-3.400 2.600 5.600 2.300-1-2.600-5.500h5z" fill="#fff" stroke="#1c1c30" />
        </Pointer>
        <Tear />
      </Page>
    </>
  );
}
